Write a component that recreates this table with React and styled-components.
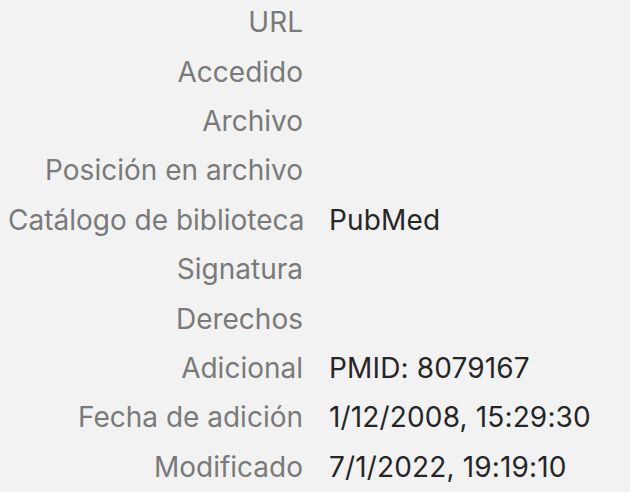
import React from "react";
import styled, { createGlobalStyle } from "styled-components";

const Global = createGlobalStyle`
  html, body { margin: 0; padding: 0; background: #f2f2f2; }
  body { font-family: Inter, "Noto Sans", sans-serif; -webkit-font-smoothing: antialiased; }
`;

const Pane = styled.div`
  display: grid;
  grid-template-columns: 295px auto;
  column-gap: 26px;
  grid-auto-rows: 49.4px;
  padding: 0 0 0 8px;
  width: 630px;
  height: 492px;
  box-sizing: border-box;
  background: #f2f2f2;
  align-items: center;
`;

const Label = styled.div`
  text-align: right;
  color: #7a7a7a;
  font-size: 28px;
  line-height: 1;
  padding-bottom: 5px;
  white-space: nowrap;
`;

const Value = styled.div`
  color: #262626;
  font-size: 28px;
  letter-spacing: 0.15px;
  line-height: 1;
  padding-bottom: 5px;
  white-space: nowrap;
`;

const rows = [
  ["URL", ""],
  ["Accedido", ""],
  ["Archivo", ""],
  ["Posición en archivo", ""],
  ["Catálogo de biblioteca", "PubMed"],
  ["Signatura", ""],
  ["Derechos", ""],
  ["Adicional", "PMID: 8079167"],
  ["Fecha de adición", "1/12/2008, 15:29:30"],
  ["Modificado", "7/1/2022, 19:19:10"],
];

export default function App() {
  return (
    <>
      <Global />
      <Pane>
        {rows.map(([l, v]) => (
          <React.Fragment key={l}>
            <Label>{l}</Label>
            <Value>{v}</Value>
          </React.Fragment>
        ))}
      </Pane>
    </>
  );
}
